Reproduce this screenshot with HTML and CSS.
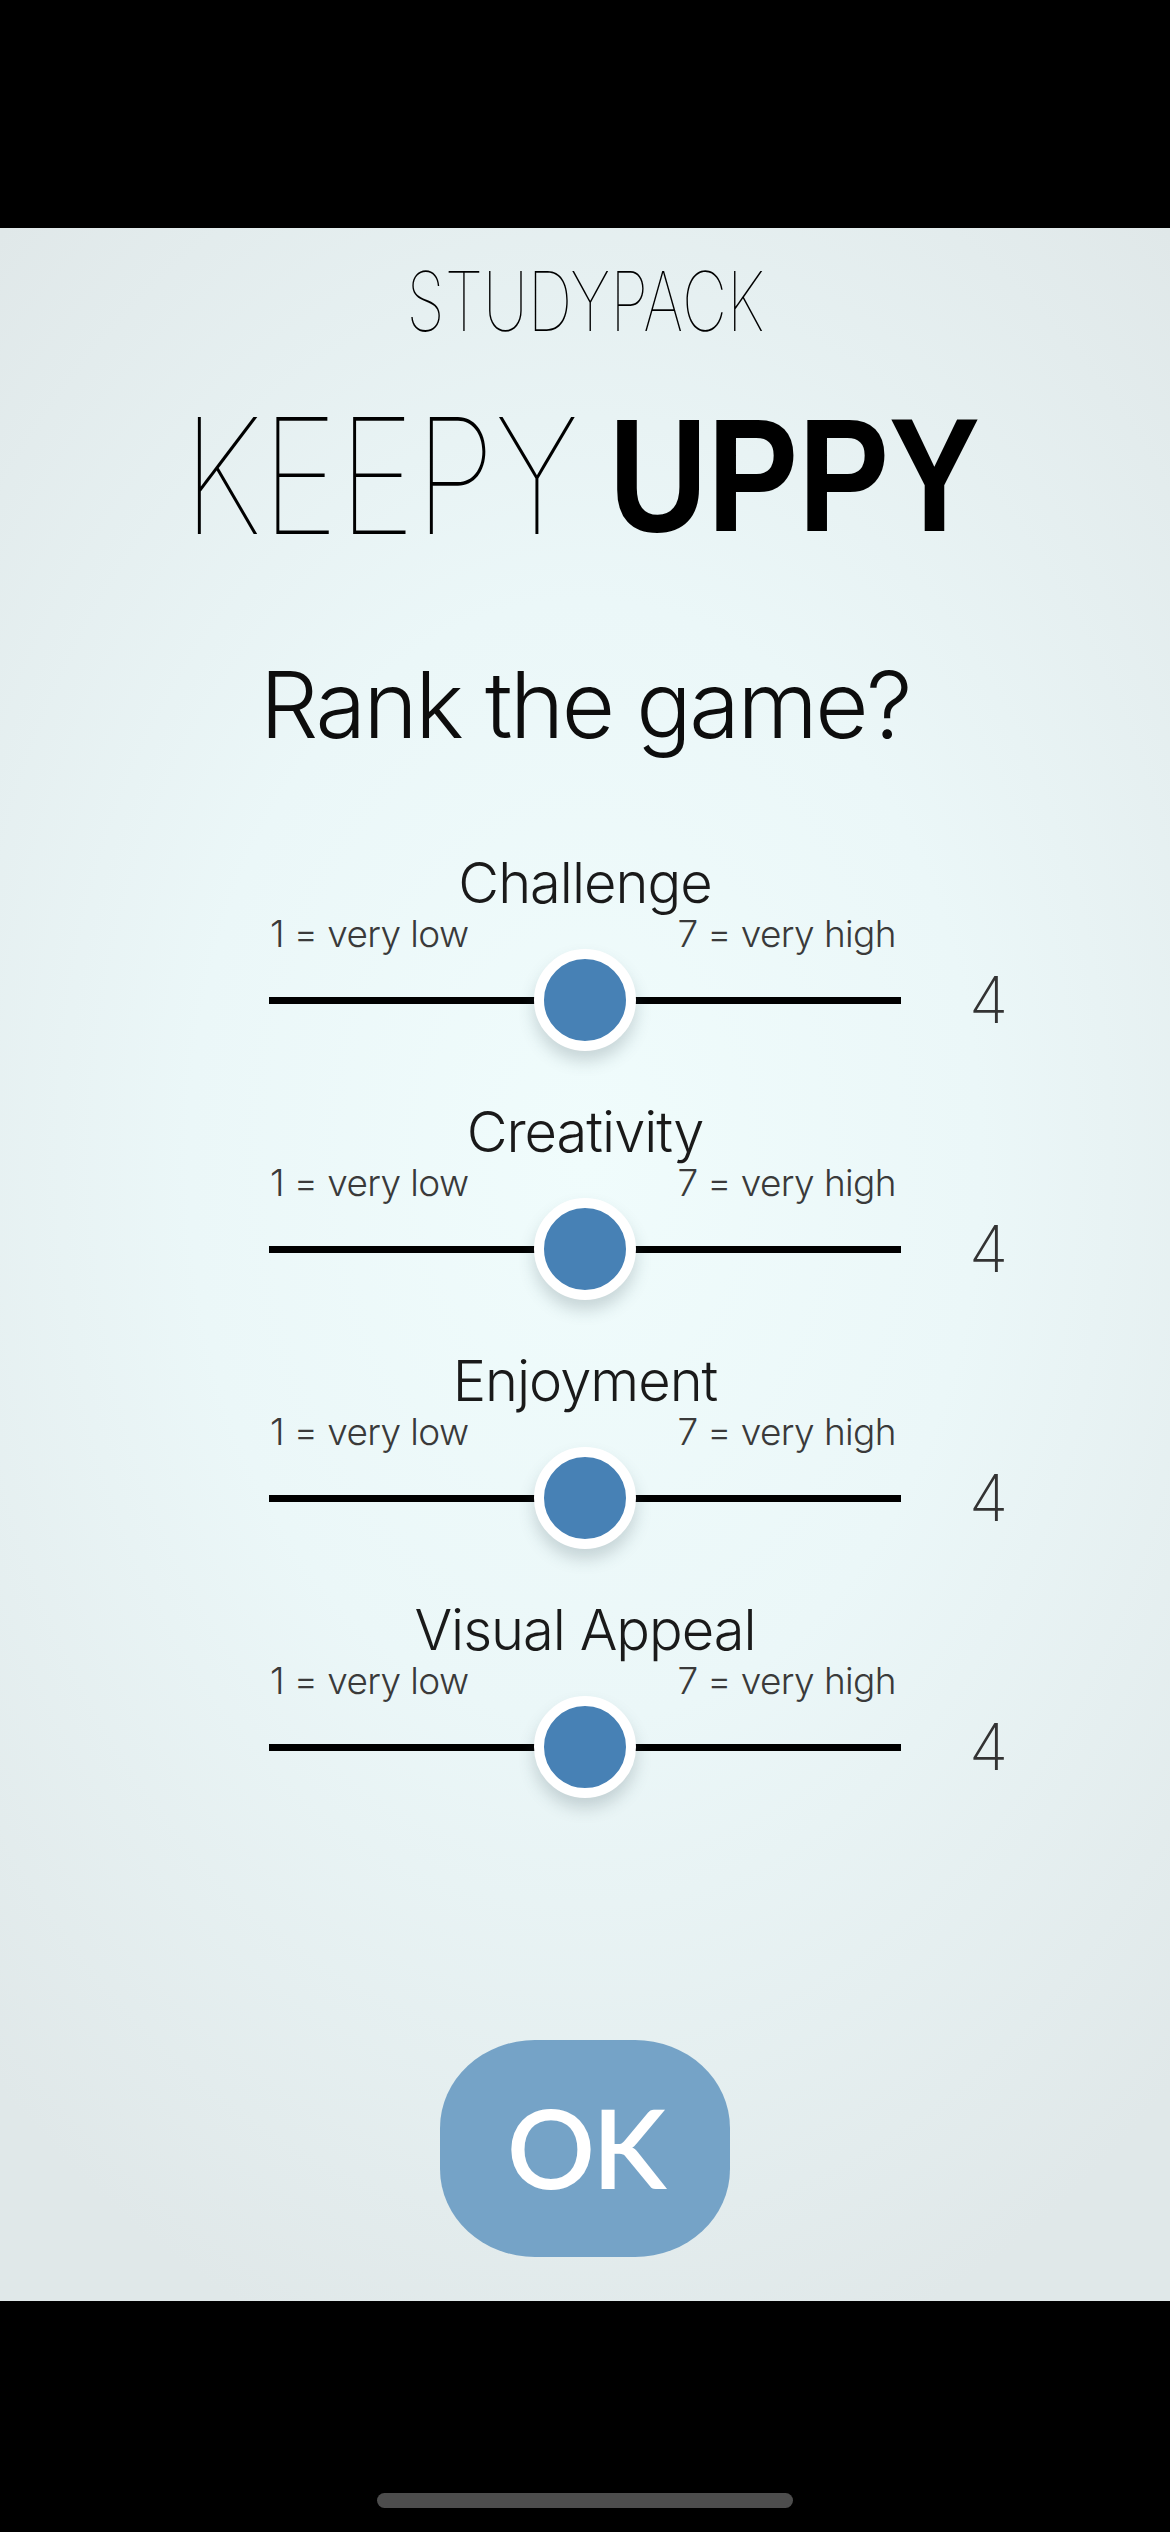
FILE: index.html
```html
<!DOCTYPE html>
<html>
<head>
<meta charset="utf-8">
<link rel="stylesheet" href="styles.css">
</head>
<body>
<div class="screen">
  <div class="topbar"></div>
  <main class="content">
    <div class="brand"><span class="brand-text">STUDYPACK</span></div>
    <h1 class="title">
      <span class="word word-thin"><span class="glyphs">KEEPY</span></span>
      <span class="word word-bold"><span class="glyphs">UPPY</span></span>
    </h1>
    <h2 class="question">Rank the game?</h2>
    <div class="sliders">
      <div class="slider">
        <div class="label">Challenge</div>
        <div class="scale"><span>1 = very low</span><span>7 = very high</span></div>
        <div class="track"><div class="thumb"></div></div>
        <div class="value">4</div>
      </div>
      <div class="slider">
        <div class="label">Creativity</div>
        <div class="scale"><span>1 = very low</span><span>7 = very high</span></div>
        <div class="track"><div class="thumb"></div></div>
        <div class="value">4</div>
      </div>
      <div class="slider">
        <div class="label">Enjoyment</div>
        <div class="scale"><span>1 = very low</span><span>7 = very high</span></div>
        <div class="track"><div class="thumb"></div></div>
        <div class="value">4</div>
      </div>
      <div class="slider">
        <div class="label">Visual Appeal</div>
        <div class="scale"><span>1 = very low</span><span>7 = very high</span></div>
        <div class="track"><div class="thumb"></div></div>
        <div class="value">4</div>
      </div>
    </div>
    <button class="ok">OK</button>
  </main>
  <div class="bottombar"><div class="home"></div></div>
</div>
</body>
</html>
```
FILE: styles.css
```css
* { box-sizing: border-box; }
html, body { margin: 0; padding: 0; background: #000; }
.screen {
  width: 1170px;
  height: 2532px;
  display: flex;
  flex-direction: column;
  background: #000;
  font-family: "Inter", "Liberation Sans", sans-serif;
  color: #111;
}
.topbar { height: 228px; background: #000; flex: none; }
.content {
  height: 2073px;
  flex: none;
  display: flex;
  flex-direction: column;
  align-items: center;
  background: radial-gradient(ellipse 75% 60% at 50% 45%, #f0fcfc 0%, #ebf7f8 45%, #e0e8e9 100%);
  padding-top: 33px;
}
.brand {
  height: 82px;
  font-size: 82px;
  line-height: 1;
  font-weight: 100;
  color: #000;
}
.brand-text { display: inline-block; transform: scaleX(0.76); }
.title {
  margin: 52px 0 0;
  font-size: 161px;
  line-height: 1;
  height: 161px;
  display: flex;
  gap: 40px;
  padding-right: 16px;
  color: #000;
}
.word { display: block; white-space: nowrap; }
.glyphs { display: inline-block; transform-origin: left center; }
.word-thin { width: 386px; font-weight: 100; }
.word-thin .glyphs { transform: scaleX(0.816); }
.word-bold { width: 362px; font-weight: 700; font-family: "Liberation Sans", sans-serif; }
.word-bold .glyphs { transform: scaleX(0.846); }
.question {
  margin: 103px 0 0;
  font-size: 92px;
  line-height: 1;
  font-weight: 300;
  letter-spacing: -2.4px;
  color: #0d0d0d;
}
.sliders {
  margin-top: 104px;
  display: flex;
  flex-direction: column;
  gap: 74px;
  align-self: flex-start;
  margin-left: 269px;
}
.slider {
  display: grid;
  grid-template-columns: 632px auto;
  column-gap: 68px;
  align-items: center;
}
.label {
  grid-column: 1;
  margin-bottom: 4px;
  text-align: center;
  font-size: 56px;
  line-height: 1;
  font-weight: 300;
  letter-spacing: -1px;
  color: #1a1a1a;
}
.scale {
  grid-column: 1;
  display: flex;
  justify-content: space-between;
  padding-left: 1px;
  padding-right: 5px;
  font-size: 37px;
  line-height: 1;
  font-weight: 300;
  letter-spacing: -0.6px;
  color: #3a3a3a;
}
.track {
  grid-column: 1;
  grid-row: 3;
  margin-top: 18px;
  height: 60px;
  position: relative;
}
.track::before {
  content: "";
  position: absolute;
  left: 0;
  right: 0;
  top: 26.5px;
  height: 7px;
  background: #000;
}
.thumb {
  position: absolute;
  left: 265px;
  top: -21px;
  width: 102px;
  height: 102px;
  border-radius: 50%;
  background: #4781b5;
  border: 10.5px solid #fff;
  box-shadow: 0 10px 16px rgba(60, 80, 90, 0.22);
}
.value {
  grid-column: 2;
  grid-row: 3;
  margin-top: 18px;
  font-size: 64px;
  line-height: 60px;
  font-weight: 200;
  color: #333;
}
.ok {
  margin-top: auto;
  margin-bottom: 44px;
  width: 290px;
  height: 217px;
  border: none;
  border-radius: 95px / 88px;
  background: #75a3c7;
  color: #fff;
  font-family: "Lato", sans-serif;
  font-weight: 600;
  font-size: 110px;
  line-height: 1;
  padding: 0 0 6px;
  letter-spacing: -3px;
}
.bottombar {
  height: 231px;
  flex: none;
  background: #000;
  position: relative;
}
.home {
  position: absolute;
  left: 377px;
  top: 192px;
  width: 416px;
  height: 15px;
  border-radius: 8px;
  background: #4d4d4d;
}
```
